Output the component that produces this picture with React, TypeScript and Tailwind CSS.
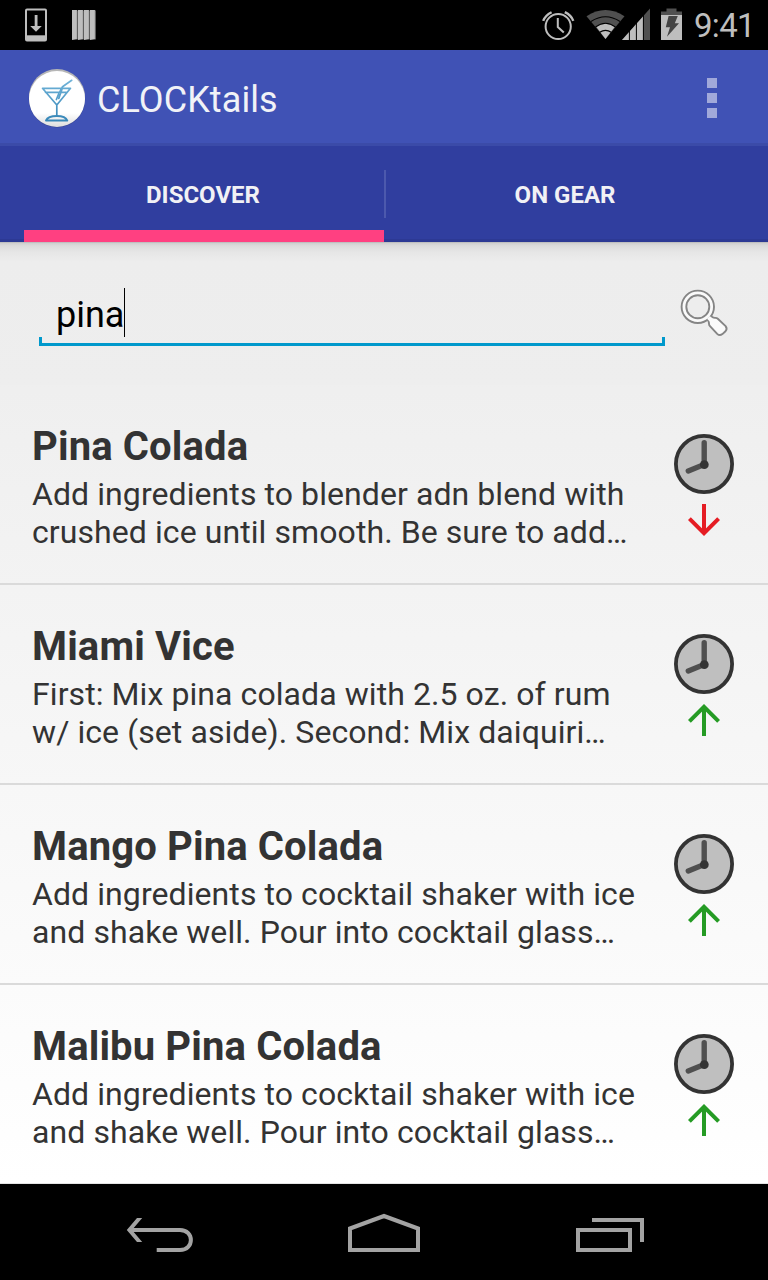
import { clsx } from 'clsx';

type Cocktail = {
  name: string;
  lines: [string, string];
  onGear: boolean;
};

const cocktails: Cocktail[] = [
  {
    name: 'Pina Colada',
    lines: ['Add ingredients to blender adn blend with', 'crushed ice until smooth. Be sure to add…'],
    onGear: true,
  },
  {
    name: 'Miami Vice',
    lines: ['First: Mix pina colada with 2.5 oz. of rum', 'w/ ice (set aside). Second: Mix daiquiri…'],
    onGear: false,
  },
  {
    name: 'Mango Pina Colada',
    lines: ['Add ingredients to cocktail shaker with ice', 'and shake well. Pour into cocktail glass…'],
    onGear: false,
  },
  {
    name: 'Malibu Pina Colada',
    lines: ['Add ingredients to cocktail shaker with ice', 'and shake well. Pour into cocktail glass…'],
    onGear: false,
  },
];

function StatusBar() {
  return (
    <div className="flex h-[50px] shrink-0 items-start bg-black">
      <svg className="ml-6 mt-2" width="24" height="34" viewBox="0 0 24 34">
        <rect x="2" y="1.5" width="20" height="31" rx="1" fill="none" stroke="#bebebe" strokeWidth="2" />
        <path d="M2 27.3h20v5H2z" fill="#bebebe" />
        <path d="M10.7 7h2.8v11h4.3L12 23.8 6.2 18h4.5z" fill="#bebebe" />
      </svg>
      <svg className="ml-6 mt-2" width="24" height="34" viewBox="0 0 24 34">
        {[0, 6, 12, 18].map((x) => (
          <g key={x}>
            <path d={`M${x} 2h5v29.3l-5 .7z`} fill="#bebebe" />
            <path d={`M${x + 4.8} 2l1 .8v28.5l-1 .5z`} fill="#777" />
          </g>
        ))}
      </svg>
      <svg className="ml-auto mt-2" width="34" height="34" viewBox="0 0 34 34" fill="none" stroke="#bebebe">
        <circle cx="16.2" cy="18.5" r="12.6" strokeWidth="2" />
        <path d="M15.8 9.9V19l6 5.5" strokeWidth="2" />
        <path d="M1.2 12.8Q3.2 7.4 9.6 4.2M22.8 4.2Q29.3 7.4 31.3 12.8" strokeWidth="2.4" />
      </svg>
      <svg className="ml-2.5 mt-2" width="66" height="34" viewBox="0 0 66 34">
        <path d="M.5 8.3Q19.5 -4.5 38.5 8.3L19.5 31z" fill="#505050" />
        <path d="M9.8 18.3Q19.5 13 29.2 18.3L19.5 31z" fill="#bebebe" />
        <g fill="none" stroke="#000" strokeWidth="1.2">
          <path d="M5 13.5Q19.5 4 34 13.5M9.5 19Q19.5 11.5 29.5 19M13.8 24.2Q19.5 20.4 25.2 24.2" />
        </g>
        <path d="M36 32L64 .5V32z" fill="#505050" />
        <path d="M36 32L57 8.5V32z" fill="#bebebe" />
        <path d="M43.4 20v12M50.4 14v18M57.4 5v27" stroke="#000" strokeWidth="1" />
      </svg>
      <svg className="ml-1.5 mt-2" width="28" height="34" viewBox="0 0 28 34">
        <path d="M3 3.5h5.5V.5h10v3H24V7H3z" fill="#505050" />
        <path d="M3 7h21v25H3z" fill="#bebebe" />
        <path d="M10.6 8h9.2l-3 7.2h4.2L9 28.8l3-9.5H7.8z" fill="#444" />
      </svg>
      <span className="ml-2 mr-[15px] mt-[6px] w-[59px] whitespace-nowrap text-[33px] leading-[40px] tracking-[-0.7px] text-[#bebebe]">
        9:41
      </span>
    </div>
  );
}

function AppBar() {
  return (
    <header className="flex h-24 shrink-0 items-center border-b-[3px] border-[#3b4ba8] bg-[#4052b5]">
      <svg className="ml-7 mt-[3px]" width="58" height="60" viewBox="0 0 58 60">
        <defs>
          <linearGradient id="logo" x1="0" y1="0" x2="0" y2="1">
            <stop offset="0" stopColor="#fff" />
            <stop offset=".75" stopColor="#fff" />
            <stop offset="1" stopColor="#ddd" />
          </linearGradient>
          <linearGradient id="glass" x1="0" y1="10" x2="0" y2="53" gradientUnits="userSpaceOnUse">
            <stop offset="0" stopColor="#73b5da" />
            <stop offset="1" stopColor="#3586b7" />
          </linearGradient>
        </defs>
        <circle cx="29" cy="31.3" r="28.2" fill="#303c78" opacity=".6" />
        <circle cx="29" cy="29" r="28" fill="#b6b6b6" />
        <circle cx="29" cy="31" r="28" fill="url(#logo)" />
        <g fill="none" stroke="url(#glass)" strokeWidth="1.7" strokeLinecap="round" strokeLinejoin="round">
          <path d="M14.5 20.3h28L28.8 37zM17.5 24.3h21.5M28.8 37v11M28.4 31.5l2.2-5.5M30.8 30.5l3.6-10.5M31.5 24.5l3-5.8 9.2-6.4" />
          <path d="M18 52.5Q20 48 28.8 48t10.5 4.5z" strokeWidth="1.9" />
        </g>
      </svg>
      <h1 className="ml-[11px] mt-[7px] whitespace-nowrap text-[36px] leading-[44px] tracking-[0.08px] text-[#f1f2f7]">
        CLOCKtails
      </h1>
      <div className="ml-auto mr-[51px] mt-[3px] flex flex-col gap-[5px]">
        <i className="size-2.5 bg-[#a1a9da]" />
        <i className="size-2.5 bg-[#a1a9da]" />
        <i className="size-2.5 bg-[#a1a9da]" />
      </div>
    </header>
  );
}

function Tabs() {
  return (
    <nav className="flex h-24 shrink-0 items-stretch bg-[#303e9f] bg-[linear-gradient(transparent_93px,#2c3994_93px)] px-6 text-[24px] font-bold leading-[30px] text-[#f1f1f5]">
      <div className="flex h-24 w-[360px] flex-col border-b-[12px] border-[#ff4081] pt-[34px]">
        <span className="ml-[-2px] text-center">DISCOVER</span>
      </div>
      <div className="mt-6 h-12 w-[2px] bg-[#4c59ad]" />
      <div className="flex-1 pt-[34px] text-center">ON GEAR</div>
    </nav>
  );
}

function SearchRow() {
  return (
    <div className="flex h-[143px] shrink-0 bg-[linear-gradient(#b0b0b0_0px,#cfcfcf_1px,#dcdcdc_4px,#e6e6e6_10px,#ededed_20px,#eeeeee_143px)]">
      <div className="ml-[39px] mt-[46px] flex h-[58px] w-[626px] flex-col">
        <div className="flex h-[49px] items-start pl-[17px]">
          <span className="whitespace-nowrap text-[36px] leading-[54px] text-black">pina</span>
          <span className="h-[49px] w-px bg-black" />
        </div>
        <div className="h-[9px] border-x-[3px] border-b-[3px] border-[#0099cc]" />
      </div>
      <svg className="ml-[15px] mt-[46px]" width="50" height="52" viewBox="0 0 50 52">
        <g fill="#fafafa" stroke="#858585" strokeWidth="1.9" strokeLinejoin="round">
          <path d="M27.5 31.5q1.6 1.6 1.5 4.2 0 1.4 1 2.5l7.2 7.6q2.4 2.4 5.2 .3l2.8-2.6q2.6-2.6.4-5.4l-7.8-7.4q-1-.9-2.6-.8-2.4.2-4.2-1.7z" />
          <circle cx="17.8" cy="18.8" r="16.2" />
          <circle cx="17.8" cy="18.8" r="11.5" fill="#ededed" />
        </g>
        <path d="M28.4 29.4l3.8 3.8" stroke="#fafafa" strokeWidth="4" />
      </svg>
    </div>
  );
}

function ClockIcon() {
  return (
    <svg width="60" height="60" viewBox="0 0 60 60">
      <circle cx="30" cy="30" r="28.1" fill="#bfbfbf" stroke="#333" strokeWidth="3.8" />
      <path d="M30.2 8.8v21.7L14.3 37" fill="none" stroke="#505050" strokeWidth="5.4" strokeLinecap="round" />
      <circle cx="30.3" cy="30.7" r="4.4" fill="#333" />
    </svg>
  );
}

function CocktailRow({ cocktail, last }: { cocktail: Cocktail; last: boolean }) {
  return (
    <li
      className={clsx(
        'flex shrink-0 whitespace-nowrap text-[#333]',
        last ? 'h-[199px] border-b border-[#e3e3e3]' : 'h-[200px] border-b-2 border-[#dadada]'
      )}
    >
      <div className="ml-8 mt-[38px] w-[642px]">
        <h2 className="mb-1 text-[40px] font-bold leading-[48px] tracking-[0.13px]">{cocktail.name}</h2>
        {cocktail.lines.map((line) => (
          <p key={line} className="text-[32px] leading-[38px] tracking-[0.08px]">
            {line}
          </p>
        ))}
      </div>
      <div className="mt-[49px] flex w-[60px] flex-col items-center gap-[10px]">
        <ClockIcon />
        <svg width="32" height="32" viewBox="0 0 32 32" fill="none" strokeWidth="4">
          {cocktail.onGear ? (
            <path d="M16 0v30M1.4 14.6L16 29.2l14.6-14.6" stroke="#e51c23" />
          ) : (
            <path d="M16 32V2M1.4 17.4L16 2.8l14.6 14.6" stroke="#259b24" />
          )}
        </svg>
      </div>
    </li>
  );
}

function NavigationBar() {
  return (
    <div className="flex h-24 shrink-0 items-center justify-center bg-black">
      <svg width="648" height="96" viewBox="60 0 648 96" fill="none" stroke="#a3a3a3" strokeWidth="4">
        <path d="M126.8 46L137 34h5.2L132 46l10.2 12H137z" fill="#a3a3a3" stroke="none" />
        <path d="M130 46h50c14.5 0 14.5 20 0 20h-23.3" />
        <path d="M350 66V44.5L384 32l34 12.5V66z" />
        <path d="M578 46h52v20h-52zM592 36h50v22" />
      </svg>
    </div>
  );
}

export default function App() {
  return (
    <div className="flex h-[1280px] w-[768px] flex-col overflow-hidden bg-black font-['Roboto',sans-serif]">
      <StatusBar />
      <AppBar />
      <Tabs />
      <main className="flex h-[942px] shrink-0 flex-col bg-[linear-gradient(#ececec,#ffffff)]">
        <SearchRow />
        <ul>
          {cocktails.map((cocktail, i) => (
            <CocktailRow key={cocktail.name} cocktail={cocktail} last={i === cocktails.length - 1} />
          ))}
        </ul>
      </main>
      <NavigationBar />
    </div>
  );
}
